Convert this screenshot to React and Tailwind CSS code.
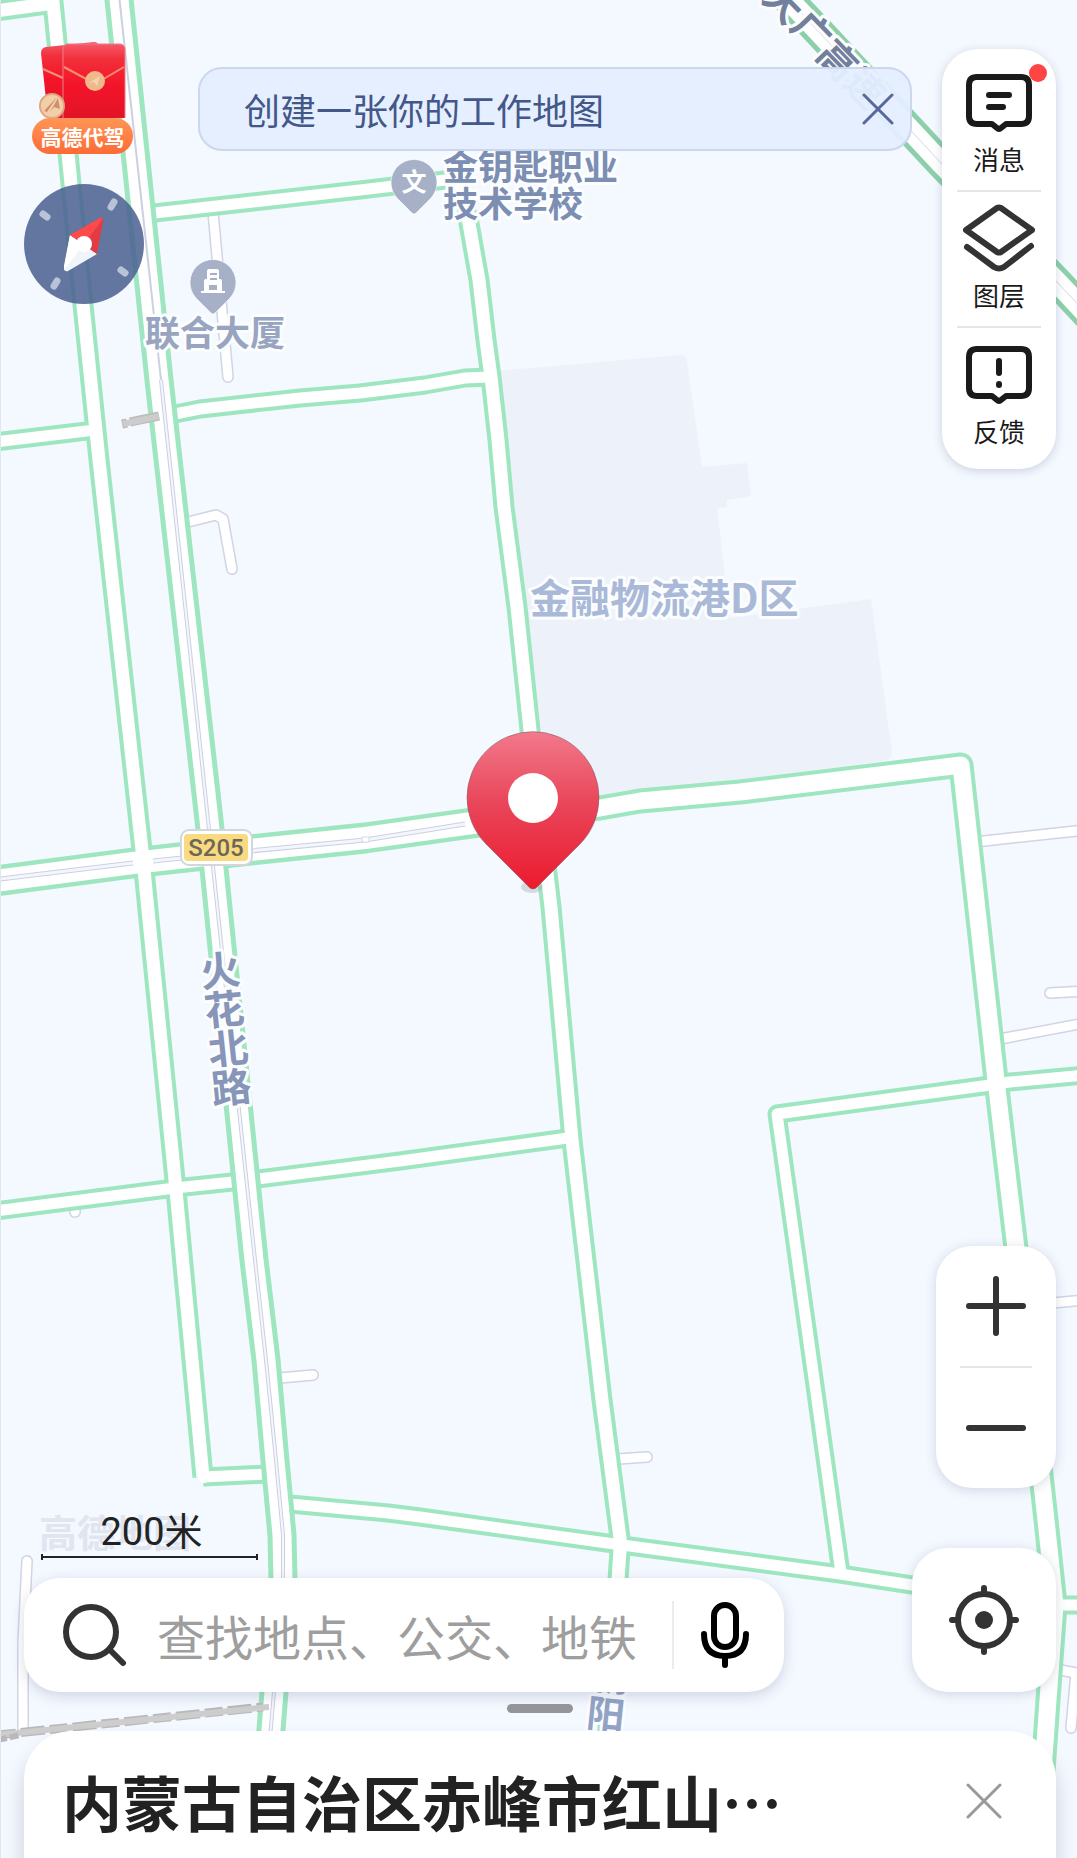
import React from "react";

const GREEN = "#9de6bf";
const CASING = "#d0d4e4";

const smallRoads = [
  "M213 212 L228 377",
  "M188 522 L216 515 L223 519 L232 569",
  "M280 1378 L313 1375",
  "M618 1459 L647 1457",
  "M975 842 L1085 830",
  "M1050 993 L1085 991",
  "M1000 1039 L1085 1023",
  "M1020 1306 L1085 1300",
  "M27 1561 Q25 1600 23 1643 L23 1728",
  "M1055 1669 L1076 1673 L1071 1728",
  "M75 1209 L75 1212",
];

const minorRoads = [
  "M150 213.5 L360 190 L445 180 Q463 178 467 212",
  "M170 415 L200 409 L300 398 L360 393 L425 385 L465 378 L490 377",
  "M-5 442 L95 430",
  "M-5 1211 L175 1188 L242 1181 L400 1161 L575 1137",
  "M203 1477 L268 1474",
  "M290 1504 L388 1513 L420 1517 L607 1543 L840 1574 L912 1585 L1055 1605 L1085 1605",
  "M841 1573 L817 1400 L777 1114 L983 1086 L1010 1082 L1085 1075",
];

const mediumRoads = [
  "M-5 11 L54 3",
  "M52 -8 L54 12 L83 305 L99 460 L142 850 L175 1180 L192 1360 L203 1477",
  "M467 212 L479 280 L486 340 L491 377 L498 440 L504 507 L517 607 L530 730 L551 907 L572 1140 L602 1400 L620 1538 L620 1550 L606 1760",
];

const MAIN_H = "M-5 881 L133 863 L250 850 L365 838 L465 824 L533 815";
const EAST =
  "M520 816 L600 808 L640 801 L740 792 L961 765 L996 1080 L1015 1240 L1046 1520 L1055 1605 L1048 1700 L1041 1800";
const MAIN_V =
  "M118 -10 L159 380 L209 820 L254 1260 L266 1360 L274 1450 L282 1535 L283 1580 L274 1692 L267 1780";
const HIGHWAY = "M770 -20 L820 33 L942 164 L1057 282 L1100 328";

function Roads({ paths, width, fill, cap }) {
  return paths.map((d) => (
    <path key={d} d={d} fill="none" stroke={fill} strokeWidth={width} strokeLinejoin="round" strokeLinecap={cap} />
  ));
}

function PoiPin({ x, y, children }) {
  return (
    <g transform={`translate(${x} ${y})`}>
      <path d="M-17 16 A23 23 0 1 1 17 16 L2 31 Q0 33 -2 31 Z" fill="#a6b0c7" stroke="#fff" strokeOpacity=".6" />
      {children}
    </g>
  );
}

function Label({ x, y, size, color, rotate = 0, anchor = "start", children }) {
  return (
    <text
      transform={`translate(${x} ${y}) rotate(${rotate})`}
      textAnchor={anchor}
      fontSize={size}
      fontWeight="700"
      fill={color}
      stroke="#fbfdff"
      strokeWidth="6"
      strokeLinejoin="round"
      paintOrder="stroke"
    >
      {children}
    </text>
  );
}

function StreetLabel({ glyphs, size, color, rotate }) {
  return glyphs.map(([char, x, y]) => (
    <g key={char} transform={`translate(${x} ${y}) rotate(${rotate})`}>
      <Label x={0} y={size * 0.38} size={size} color={color} anchor="middle">
        {char}
      </Label>
    </g>
  ));
}

function MapCanvas() {
  return (
    <svg
      className="absolute inset-0 h-full w-full"
      viewBox="0 0 1077 1858"
      preserveAspectRatio="xMidYMin slice"
      role="img"
      aria-label="地图"
    >
      <defs>
        <linearGradient id="pin" x1="0" y1="0" x2="0" y2="1">
          <stop offset="0" stopColor="#f2798b" />
          <stop offset=".45" stopColor="#e9465a" />
          <stop offset="1" stopColor="#ec1a2e" />
        </linearGradient>
      </defs>
      <rect width="1077" height="1858" fill="#f4f8ff" />
      <path
        d="M495 371 L680 355 Q686 355 687 361 L702 467 L747 463 L751 496 L727 500 L727 507 L717 508 L730 618 L871 599 L892 752 Q892 759 884 761 L540 806 Z"
        fill="#edf2fa"
      />

      <Roads paths={smallRoads} width={12} fill={CASING} cap="round" />
      <Roads paths={smallRoads} width={9} fill="#fff" cap="round" />

      <Roads paths={minorRoads} width={19} fill={GREEN} cap="butt" />
      <Roads paths={[MAIN_H]} width={31} fill={GREEN} cap="butt" />
      <Roads paths={[EAST]} width={25} fill={GREEN} cap="butt" />
      <Roads paths={mediumRoads} width={21} fill={GREEN} cap="butt" />
      <Roads paths={minorRoads} width={11} fill="#fff" cap="butt" />
      <Roads paths={mediumRoads} width={13} fill="#fff" cap="butt" />
      <Roads paths={[EAST]} width={17} fill="#fff" cap="butt" />
      <circle cx="204" cy="1477" r="6" fill="#fff" />
      <Roads paths={[MAIN_V]} width={29} fill={GREEN} cap="butt" />
      <Roads paths={[MAIN_V]} width={19} fill="#fff" cap="butt" />
      <Roads paths={[MAIN_H]} width={22} fill="#fff" cap="butt" />

      <path d="M119 -5 L161 380" fill="none" stroke="#ccd0e2" strokeWidth="2" />
      <path
        d="M161 380 L208 820 L255 1260 L266 1360 L275 1450 L283 1535 L283 1580 L274 1692 L268 1760"
        fill="none"
        stroke="#ccd0e2"
        strokeWidth="4"
      />
      <path
        d="M161 380 L208 820 L255 1260 L266 1360 L275 1450 L283 1535 L283 1580 L274 1692 L268 1760"
        fill="none"
        stroke="#f4f6fd"
        strokeWidth="2"
      />
      <path d="M0 879 L133 863 M153 861 L250 851 L365 840 L465 824" fill="none" stroke="#ccd0e2" strokeWidth="5" />
      <path d="M0 879 L133 863 M153 861 L250 851 L365 840 L465 824" fill="none" stroke="#f4f6fd" strokeWidth="3" />
      <path d="M362 837 h7 v5 h-7 z" fill="#fff" stroke="#d5d9e8" />

      <path d={HIGHWAY} fill="none" stroke="#8bd0aa" strokeWidth="31" />
      <path d={HIGHWAY} fill="none" stroke="#fff" strokeWidth="21" />
      <path d={HIGHWAY} fill="none" stroke="#d5d9e8" strokeWidth="1" />

      <g fill="none">
        <path d="M-2 1735 L263 1707" stroke="#b9b9bb" strokeWidth="9" strokeDasharray="18 5 24 5" />
        <path d="M-2 1735 L269 1707" stroke="#cdcdcd" strokeWidth="6" />
        <path d="M-2 1740 L20 1735" stroke="#b9b9bb" strokeWidth="6" strokeDasharray="9 3" />
        <path d="M122 424 L127 423 M130 422 L159 416" stroke="#bdbdbf" strokeWidth="9" />
        <path d="M123 424 L159 416" stroke="#cccccc" strokeWidth="6" />
      </g>

      <g fontFamily='"Noto Sans CJK SC", sans-serif'>
        <StreetLabel
          glyphs={[["大", 784, 3], ["广", 812, 31], ["高", 838, 60], ["速", 865, 88]]}
          size={38}
          color="#72809b"
          rotate={46}
        />
        <StreetLabel
          glyphs={[["火", 220, 970], ["花", 224, 1009], ["北", 228, 1048], ["路", 231, 1087]]}
          size={40}
          color="#8795b8"
          rotate={-6}
        />
        <StreetLabel glyphs={[["朝", 610, 1676], ["阳", 606, 1714]]} size={38} color="#93a3c6" rotate={6} />

        <Label x={443} y={180} size={35} color="#7c8eb2">金钥匙职业</Label>
        <Label x={443} y={217} size={35} color="#7c8eb2">技术学校</Label>
        <Label x={145} y={346} size={35} color="#98a4c0">联合大厦</Label>
        <Label x={530} y={613} size={40} color="#aab9d8">金融物流港D区</Label>

        <PoiPin x={414} y={182}>
          <text y="9" textAnchor="middle" fontSize="25" fontWeight="700" fill="#fff">文</text>
        </PoiPin>
        <text x="39" y="1547" fontSize="38" fontWeight="700" fill="#e0e5f0">高德地图</text>
      </g>

      <PoiPin x={213} y={282}>
        <path
          d="M-4 -13 h8 q2 0 2 2 v8 h1 q2 0 2 2 v10 h3 v2 h-24 v-2 h3 v-10 q0 -2 2 -2 h1 v-8 q0 -2 2 -2 z M-3 -9 v2 h7 v-2 z M-3 -4 v2 h7 v-2 z M-4 3 v5 h8 v-5 z"
          fill="#fff"
          fillRule="evenodd"
        />
      </PoiPin>

      <rect x="181" y="830" width="71" height="35" rx="8" fill="#fff" stroke="#d3d6dd" strokeWidth="2" />
      <rect x="184" y="834" width="64" height="27" rx="4" fill="#f9da80" />
      <text x="216" y="856" textAnchor="middle" fontFamily="Roboto, sans-serif" fontSize="24" fontWeight="500" fill="#6c6756">
        S205
      </text>

      <ellipse cx="532" cy="887" rx="11" ry="6" fill="#9aa3ad" fillOpacity=".35" />
      <path d="M486 844 A66 66 0 1 1 580 844 L536 888 Q533 890 530 888 Z" fill="url(#pin)" stroke="#8a5a66" strokeOpacity=".6" />
      <circle cx="533" cy="798" r="25" fill="#fff" />

      <path d="M.5 0 V1858" stroke="#e1e7f2" />
    </svg>
  );
}

function PromoButton() {
  return (
    <button type="button" className="flex w-[101px] flex-col items-center">
      <svg width="101" height="76" viewBox="0 0 101 76" aria-hidden="true">
        <defs>
          <linearGradient id="env" x1="0" y1="0" x2="0" y2="1">
            <stop offset="0" stopColor="#f5596a" />
            <stop offset=".18" stopColor="#f2303c" />
            <stop offset=".5" stopColor="#f4142a" />
            <stop offset="1" stopColor="#dd1426" />
          </linearGradient>
        </defs>
        <path d="M14 5 L62 0 Q66 0 67 4 L70 76 H16 L9 11 Q9 6 14 5 Z" fill="url(#env)" />
        <path d="M11 27 L31 36" stroke="#f5906f" strokeWidth="2" />
        <rect x="31" y="2" width="62" height="82" rx="5" fill="url(#env)" stroke="#f07c86" strokeWidth="1" />
        <path d="M32 25 L58 39 M68 39 L92 25" stroke="#f5906f" strokeWidth="2" fill="none" />
        <circle cx="63" cy="39" r="10" fill="#efb98a" />
        <path d="M57 41 L68 34 L65 44 L62 40 Z" fill="#f7d3b2" />
        <circle cx="20" cy="64" r="12" fill="#f3cfa9" stroke="#dda981" strokeWidth="2" />
        <path d="M12 69 L25 55 L15 70 Z M18 70 L26 56 L28 67 L22 65 Z" fill="#cf8f6c" />
      </svg>
      <span className="flex h-9 w-full items-center justify-center rounded-full bg-linear-to-b from-[#ff9656] to-[#fc6a35] text-[21px] font-bold leading-none text-white">
        高德代驾
      </span>
    </button>
  );
}

function Compass() {
  return (
    <button type="button" aria-label="指南针" className="h-[120px] w-[120px]">
      <svg viewBox="0 0 120 120" className="h-full w-full">
        <circle cx="60" cy="60" r="60" fill="#4b6190" fillOpacity=".86" />
        <g stroke="#b9c3d8" strokeWidth="7" strokeLinecap="round">
          <path d="M19 30 L23 33" />
          <path d="M90 18 L87 23" />
          <path d="M97 86 L101 89" />
          <path d="M33 97 L30 102" />
        </g>
        <path d="M46 51 L73 70 L44 87 Q40 88 40 84 Z" fill="#f1f4fb" />
        <path d="M46 51 L60 60 L40 86 L40 82 Z" fill="#fff" />
        <path d="M46 51 L76 34 Q80 33 79 37 L73 70 Z" fill="#e23c42" />
        <path d="M46 51 L76 34 Q79 33 78 36 L60 60 Z" fill="#ff4a4b" />
        <circle cx="60" cy="60" r="8" fill="#fff" />
      </svg>
    </button>
  );
}

const bubble =
  "M14 11 H58 Q66 11 66 19 V50 Q66 58 58 58 H43 L38 62 Q36 64 34 62 L29 58 H14 Q6 58 6 50 V19 Q6 11 14 11 Z";

function MessageIcon() {
  return (
    <svg width="72" height="72" viewBox="0 0 72 72" fill="none" stroke="#1a1a1a" strokeWidth="6" strokeLinecap="round" strokeLinejoin="round" aria-hidden="true">
      <path d={bubble} />
      <path d="M26 29 H46 M26 41 H40" />
    </svg>
  );
}

function LayersIcon() {
  return (
    <svg width="72" height="72" viewBox="0 0 72 72" fill="none" stroke="#333" strokeWidth="6" strokeLinecap="round" strokeLinejoin="round" aria-hidden="true">
      <path d="M34 6 Q36 5 38 6 L69 28 L38 50 Q36 51 34 50 L3 28 Z" />
      <path d="M4 45 L31 65 Q36 68 41 65 L68 44" />
    </svg>
  );
}

function FeedbackIcon() {
  return (
    <svg width="72" height="72" viewBox="0 0 72 72" fill="none" stroke="#1a1a1a" strokeWidth="6" strokeLinecap="round" strokeLinejoin="round" aria-hidden="true">
      <path d={bubble} />
      <path d="M36 23 V35 M36 46 V47" />
    </svg>
  );
}

const tools = [
  { label: "消息", Icon: MessageIcon, badge: true },
  { label: "图层", Icon: LayersIcon },
  { label: "反馈", Icon: FeedbackIcon },
];

function Toolbar() {
  return (
    <nav className="mt-[7px] flex w-[114px] shrink-0 flex-col items-center rounded-[36px] bg-white py-[7px] shadow-[0_2px_10px_rgba(60,75,110,0.22)]">
      {tools.map(({ label, Icon, badge }, i) => (
        <React.Fragment key={label}>
          {i > 0 && <div className="h-[2px] w-[84px] bg-[#e5e5e6]" />}
          <button type="button" className="relative flex h-[134px] w-full flex-col items-center gap-1.5 pt-2.5">
            <Icon />
            <span className="text-[26px] leading-[30px] text-[#1a1a1a]">{label}</span>
            {badge && <span className="absolute right-[9px] top-2 h-[18px] w-[18px] rounded-full bg-[#ff4444]" />}
          </button>
        </React.Fragment>
      ))}
    </nav>
  );
}

function Banner() {
  return (
    <section className="ml-[54px] mr-[30px] mt-[25px] flex h-[84px] min-w-0 flex-1 items-center justify-between rounded-3xl border-2 border-[#cbd7eb] bg-[#e4eeff]/95 pl-11">
      <a href="#work-map" className="truncate text-[36px] leading-[52px] text-[#435788]">
        创建一张你的工作地图
      </a>
      <button type="button" aria-label="关闭" className="flex h-full w-16 shrink-0 items-center justify-center">
        <svg width="32" height="32" viewBox="0 0 32 32" stroke="#56699a" strokeWidth="3" strokeLinecap="round" aria-hidden="true">
          <path d="M2 2 L30 30 M30 2 L2 30" />
        </svg>
      </button>
    </section>
  );
}

function ZoomPanel() {
  return (
    <div className="flex w-[120px] flex-col items-center self-end rounded-[36px] bg-white shadow-[0_2px_12px_rgba(60,75,110,0.2)]">
      <button type="button" aria-label="放大" className="flex h-[120px] w-full items-center justify-center">
        <svg width="60" height="60" viewBox="0 0 60 60" stroke="#333" strokeWidth="6" strokeLinecap="round" aria-hidden="true">
          <path d="M3 30 H57 M30 3 V57" />
        </svg>
      </button>
      <div className="h-[2px] w-[72px] bg-[#e5e5e6]" />
      <button type="button" aria-label="缩小" className="flex h-[120px] w-full items-center justify-center">
        <svg width="60" height="60" viewBox="0 0 60 60" stroke="#333" strokeWidth="6" strokeLinecap="round" aria-hidden="true">
          <path d="M3 30 H57" />
        </svg>
      </button>
    </div>
  );
}

function ScaleBar() {
  return (
    <div className="ml-[17px] flex w-[217px] flex-col items-center">
      <span className="pl-1 font-[Roboto,'Noto_Sans_CJK_SC',sans-serif] text-[38px] leading-9 text-[#222]">200米</span>
      <div className="mt-1 flex h-1.5 w-full items-center border-x-2 border-[#222]">
        <div className="h-[2px] w-full bg-[#222]" />
      </div>
    </div>
  );
}

function SearchBar() {
  return (
    <form className="mt-[18px] flex h-[114px] items-center rounded-[36px] bg-white pl-[39px] shadow-[0_4px_14px_rgba(60,75,110,0.2)]">
      <svg width="64" height="64" viewBox="0 0 64 64" fill="none" stroke="#333" strokeWidth="6" strokeLinecap="round" className="shrink-0" aria-hidden="true">
        <circle cx="28" cy="29" r="25" />
        <path d="M47 47 L60 60" />
      </svg>
      <input
        type="search"
        aria-label="查找地点、公交、地铁"
        placeholder="查找地点、公交、地铁"
        className="ml-[30px] min-w-0 flex-1 bg-transparent text-[48px] leading-[72px] text-[#222] outline-none placeholder:text-[#9e9e9e]"
      />
      <div className="h-[68px] w-[2px] bg-[#ebebeb]" />
      <button type="button" aria-label="语音搜索" className="flex h-full w-[110px] shrink-0 items-center justify-center pr-2">
        <svg width="48" height="66" viewBox="0 0 48 66" fill="none" stroke="#000" strokeWidth="6" strokeLinecap="round" aria-hidden="true">
          <rect x="13" y="3" width="22" height="42" rx="11" />
          <path d="M3 32 Q3 54 24 54 Q45 54 45 32 M24 55 V63" />
        </svg>
      </button>
    </form>
  );
}

function LocateButton() {
  return (
    <button
      type="button"
      aria-label="定位"
      className="flex h-36 w-36 shrink-0 items-center justify-center rounded-[36px] bg-white shadow-[0_2px_12px_rgba(60,75,110,0.2)]"
    >
      <svg width="70" height="70" viewBox="0 0 70 70" fill="none" stroke="#333" strokeWidth="6" strokeLinecap="round" aria-hidden="true">
        <circle cx="35" cy="35" r="26" />
        <path d="M35 3 V8 M35 62 V67 M3 35 H8 M62 35 H67" />
        <circle cx="35" cy="35" r="9" fill="#333" stroke="none" />
      </svg>
    </button>
  );
}

function PlaceSheet() {
  return (
    <section className="flex items-center justify-between rounded-t-[48px] bg-white pb-[21px] pl-[38px] pr-[54px] pt-[34px] shadow-[0_14px_20px_rgba(60,65,80,0.22)]">
      <h1 className="w-[720px] truncate text-[60px] font-bold leading-[72px] text-[#222]">内蒙古自治区赤峰市红山⋯</h1>
      <button type="button" aria-label="关闭" className="shrink-0">
        <svg width="36" height="36" viewBox="0 0 36 36" stroke="#999" strokeWidth="3" strokeLinecap="round" aria-hidden="true">
          <path d="M2 2 L34 34 M34 2 L2 34" />
        </svg>
      </button>
    </section>
  );
}

export default function App() {
  return (
    <main className="relative flex min-h-screen flex-col overflow-hidden bg-[#f4f8ff] font-['Noto_Sans_CJK_SC',sans-serif]">
      <MapCanvas />
      <header className="relative flex items-start pl-6 pr-[21px] pt-[42px]">
        <div className="flex w-[120px] shrink-0 flex-col gap-[30px]">
          <div className="pl-2">
            <PromoButton />
          </div>
          <Compass />
        </div>
        <Banner />
        <Toolbar />
      </header>

      <div className="relative mt-auto flex flex-col pl-6 pr-[21px] pt-10">
        <ZoomPanel />
        <div className="mt-[26px] flex items-end gap-32">
          <div className="min-w-0 flex-1">
            <ScaleBar />
            <SearchBar />
          </div>
          <LocateButton />
        </div>
        <div className="mb-[18px] mt-3 h-[9px] w-[66px] self-center rounded-full bg-[#949599]" />
        <PlaceSheet />
      </div>
    </main>
  );
}
